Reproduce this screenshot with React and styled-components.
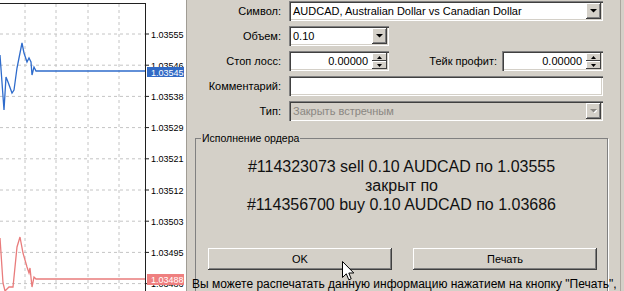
import styled, { createGlobalStyle } from "styled-components";

const GlobalStyle = createGlobalStyle`
  html, body {
    margin: 0;
    padding: 0;
  }
  body {
    background: #d4d0c8;
    font-family: "Liberation Sans", Arial, sans-serif;
    font-size: 11px;
    color: #000;
    overflow: hidden;
  }
`;

const GRID_Y = [0, 1, 2, 3, 4, 5, 6, 7, 8].map((i) => 34 + i * 31.2);
const GRID_X = [25, 56, 88, 119];
const PRICES = ["1.03555", "1.03546", "1.03538", "1.03529", "1.03521", "1.03512", "1.03503", "1.03495", "1.03486"];

const ASK = [[0, 55], [4, 110], [6, 77], [8, 82], [12, 93], [14, 90], [17, 68], [19, 58], [22, 43], [24, 53], [27, 62], [29, 58], [31, 62], [32, 75], [34, 67], [36, 71], [145, 71]];
const BID = [[0, 238], [3, 283], [5, 291], [9, 287], [13, 287], [17, 247], [20, 237], [23, 253], [27, 267], [29, 273], [30, 268], [32, 287], [34, 277], [36, 279], [145, 279]];

const toPoints = (pts) => pts.map(([x, y]) => `${x},${y}`).join(" ");

export default function App() {
  return (
    <>
      <GlobalStyle />
      <Screen>
        <Chart>
          <svg width="186" height="291" viewBox="0 0 186 291">
            {GRID_Y.map((y) => (
              <line key={y} x1="0" x2="145" y1={y} y2={y} stroke="#c4c4c4" strokeDasharray="3 3" />
            ))}
            {GRID_X.map((x) => (
              <line key={x} x1={x} x2={x} y1="4" y2="291" stroke="#c4c4c4" strokeDasharray="3 3" />
            ))}
            <line x1="0" x2="145.5" y1="3.5" y2="3.5" stroke="#202020" />
            <line x1="145.5" x2="145.5" y1="3" y2="291" stroke="#202020" />
            {GRID_Y.map((y, i) => (
              <g key={i}>
                <line x1="145" x2="149" y1={y} y2={y} stroke="#202020" />
                <text x="151" y={y + 3.5} fontSize="9" fontFamily="Liberation Sans, Arial, sans-serif" fill="#000">
                  {PRICES[i]}
                </text>
              </g>
            ))}
            <polyline points={toPoints(ASK)} fill="none" stroke="#2f6ccc" strokeWidth="1.3" />
            <polyline points={toPoints(BID)} fill="none" stroke="#e97c7c" strokeWidth="1.3" />
            <rect x="147" y="67" width="37" height="10" fill="#316ac5" />
            <text x="151" y="75.5" fontSize="9" fontFamily="Liberation Sans, Arial, sans-serif" fill="#fff">1.03545</text>
            <rect x="147" y="274" width="37" height="11" fill="#ef8080" />
            <text x="151" y="283" fontSize="9" fontFamily="Liberation Sans, Arial, sans-serif" fill="#fff">1.03488</text>
          </svg>
        </Chart>

        <Dialog>
          <Form>
            <Label>Символ:</Label>
            <Field>
              <Value>AUDCAD, Australian Dollar vs Canadian Dollar</Value>
              <DropButton><Arrow /></DropButton>
            </Field>

            <Label>Объем:</Label>
            <Field $width={100}>
              <Value>0.10</Value>
              <DropButton><Arrow /></DropButton>
            </Field>

            <Label>Стоп лосс:</Label>
            <Row>
              <Field $width={100}>
                <Value $align="right">0.00000</Value>
                <SpinBox />
              </Field>
              <SideLabel>Тейк профит:</SideLabel>
              <Field $width={101}>
                <Value $align="right">0.00000</Value>
                <SpinBox />
              </Field>
            </Row>

            <Label>Комментарий:</Label>
            <Field />

            <Label>Тип:</Label>
            <Field $disabled>
              <Value $disabled>Закрыть встречным</Value>
              <DropButton><Arrow disabled /></DropButton>
            </Field>
          </Form>

          <Group>
            <Legend>Исполнение ордера</Legend>
            <Result>
              #114323073 sell 0.10 AUDCAD по 1.03555
              <br />
              закрыт по
              <br />
              #114356700 buy 0.10 AUDCAD по 1.03686
            </Result>
            <Buttons>
              <Button>OK</Button>
              <Button>Печать</Button>
            </Buttons>
            <Note>Вы можете распечатать данную информацию нажатием на кнопку "Печать",</Note>
          </Group>
        </Dialog>

        <Cursor width="13" height="21" viewBox="0 0 13 21">
          <path d="M0.5 0.5 L0.5 16.5 L4.3 12.8 L6.8 18.8 L9.2 17.8 L6.8 12 L11.8 12 Z" fill="#fff" stroke="#000" strokeWidth="1" strokeLinejoin="miter" />
        </Cursor>
      </Screen>
    </>
  );
}

const Arrow = ({ disabled }) => (
  <svg width="7" height="4" viewBox="0 0 7 4">
    {disabled && <polygon points="1,1 8,1 4.5,4.5" fill="#fff" />}
    <polygon points="0,0 7,0 3.5,3.5" fill={disabled ? "#8a8782" : "#000"} />
  </svg>
);

const SpinBox = () => (
  <Spin>
    <SpinHalf>
      <svg width="5" height="3" viewBox="0 0 5 3"><polygon points="2.5,0 5,3 0,3" fill="#000" /></svg>
    </SpinHalf>
    <SpinHalf>
      <svg width="5" height="3" viewBox="0 0 5 3"><polygon points="0,0 5,0 2.5,3" fill="#000" /></svg>
    </SpinHalf>
  </Spin>
);

const Screen = styled.div`
  position: relative;
  display: flex;
  width: 624px;
  height: 291px;
  overflow: hidden;
`;

const Chart = styled.div`
  flex: 0 0 186px;
  height: 291px;
  background: #fff;
  border-right: 1px solid #a09c94;
  svg {
    display: block;
  }
`;

const Dialog = styled.div`
  flex: 1;
  margin-right: 3px;
  border-right: 1px solid #aaa69e;
  display: flex;
  flex-direction: column;
`;

const Form = styled.div`
  display: grid;
  grid-template-columns: 94px 1fr;
  grid-auto-rows: 20px;
  column-gap: 8px;
  row-gap: 5px;
  padding: 1px 17px 0 0;
`;

const Label = styled.div`
  text-align: right;
  line-height: 20px;
  white-space: nowrap;
`;

const SideLabel = styled(Label)`
  margin-left: auto;
  margin-right: 5px;
`;

const Row = styled.div`
  display: flex;
  align-items: center;
`;

const Field = styled.div`
  display: flex;
  align-items: center;
  box-sizing: border-box;
  width: ${(p) => (p.$width ? `${p.$width}px` : "auto")};
  height: 20px;
  padding: 2px;
  background: ${(p) => (p.$disabled ? "#d4d0c8" : "#fff")};
  box-shadow: inset 1px 1px #808080, inset 2px 2px #404040, inset -1px -1px #fff, inset -2px -2px #d4d0c8;
`;

const Value = styled.div`
  flex: 1;
  padding: 0 4px 0 2px;
  text-align: ${(p) => p.$align || "left"};
  color: ${(p) => (p.$disabled ? "#8a8782" : "#000")};
  line-height: 16px;
  white-space: nowrap;
  overflow: hidden;
`;

const DropButton = styled.div`
  flex: 0 0 15px;
  height: 16px;
  display: flex;
  align-items: center;
  justify-content: center;
  background: #d4d0c8;
  box-shadow: inset -1px -1px #404040, inset 1px 1px #fff, inset -2px -2px #808080;
  svg {
    display: block;
  }
`;

const Spin = styled.div`
  flex: 0 0 15px;
  height: 16px;
  display: flex;
  flex-direction: column;
`;

const SpinHalf = styled.div`
  flex: 1;
  display: flex;
  align-items: center;
  justify-content: center;
  background: #d4d0c8;
  box-shadow: inset -1px -1px #404040, inset 1px 1px #fff;
  svg {
    display: block;
  }
`;

const Group = styled.fieldset`
  margin: 11px 12px 0 8px;
  padding: 0 5px;
  border: 1px solid #808080;
  box-shadow: 1px 1px 0 #fff;
  min-width: 0;
`;

const Legend = styled.legend`
  padding: 0 1px;
  font-size: 10.5px;
  line-height: 13px;
`;

const Result = styled.div`
  margin-top: 12px;
  font-size: 16px;
  line-height: 19px;
  text-align: center;
  color: #111;
`;

const Buttons = styled.div`
  display: flex;
  gap: 21px;
  margin-top: 34px;
  padding: 0 5px 0 7px;
`;

const Button = styled.div`
  flex: 1;
  height: 22px;
  display: flex;
  align-items: center;
  justify-content: center;
  background: #d4d0c8;
  box-shadow: inset -1px -1px #404040, inset 1px 1px #fff, inset -2px -2px #808080;
  font-size: 11px;
`;

const Note = styled.div`
  margin: 7px -20px 0 -9px;
  white-space: nowrap;
  font-size: 12px;
  line-height: 14px;
`;

const Cursor = styled.svg`
  position: absolute;
  left: 342px;
  top: 261px;
`;
